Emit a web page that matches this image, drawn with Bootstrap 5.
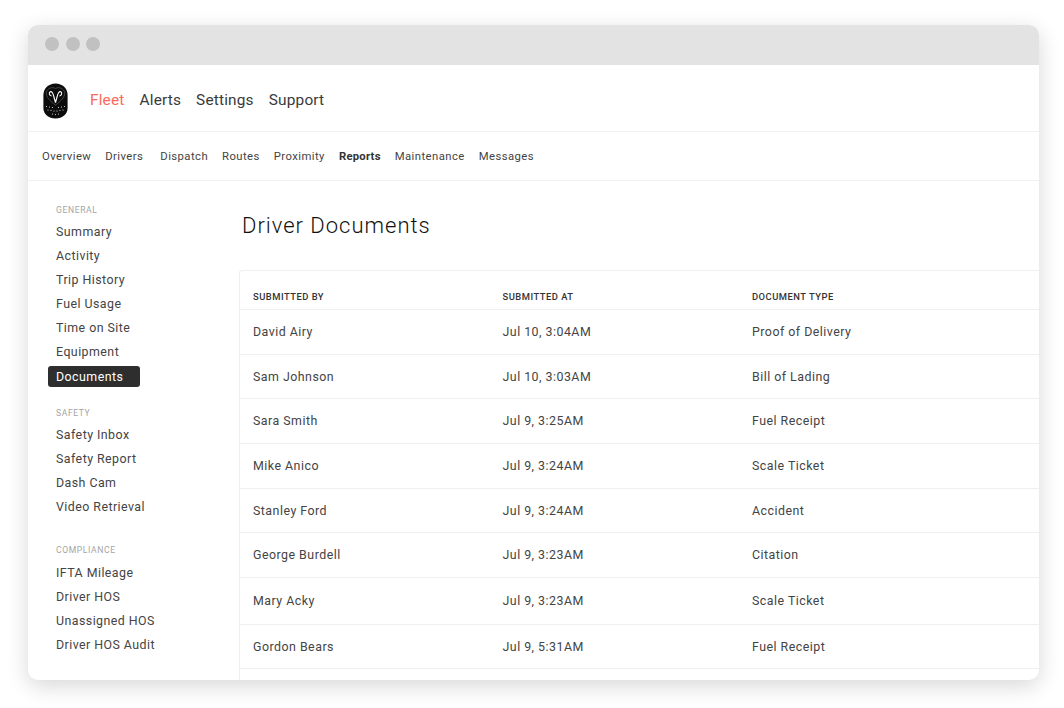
<!DOCTYPE html>
<html lang="en">
<head>
<meta charset="utf-8">
<title>Driver Documents</title>
<link href="https://cdn.jsdelivr.net/npm/bootstrap@5.3.0/dist/css/bootstrap.min.css" rel="stylesheet">
<style>
html,body{height:708px;overflow:hidden;background:#fff}
body{padding:25px 25px 28px 28px;font-family:Roboto,"Liberation Sans",sans-serif;color:#333}
.app-window{height:655px;border-radius:10px;overflow:hidden;background:#fff;box-shadow:0 6px 22px rgba(0,0,0,.16);display:flex;flex-direction:column}
.title-bar{height:40px;background:#e3e3e3;gap:6.5px;padding:0 0 2px 17px;flex:none}
.dot-btn{width:14px;height:14px;border-radius:50%;background:#c1c1c1}
.top-bar{height:67px;border-bottom:1px solid #f0f0f0;padding:6px 0 0 15px;flex:none}
.top-links{margin-left:22px;gap:15px}
.top-links a{font-size:15.4px;letter-spacing:.18px;color:#3a3a3a;text-decoration:none}
.top-links a.on{color:#fb6a5d}
.sub-bar{height:49px;border-bottom:1px solid #f0f0f0;padding:2px 0 0 14px;gap:14px;flex:none}
.sub-bar a{font-size:11.3px;letter-spacing:.43px;color:#444;text-decoration:none}
.sub-bar a.on{font-weight:700;color:#333;letter-spacing:.25px}
.sub-bar a.wide-gap{margin-right:3px}
.body-area{flex:1;min-height:0}
.side-col{width:211px;flex:none;padding:23px 0 0 20px}
.side-head{font-size:8.6px;letter-spacing:.6px;color:#a5a5a5;padding-left:8px;line-height:12px;margin-bottom:4px;text-transform:uppercase}
.side-head.spaced{margin-bottom:5px}
.side-list{margin-bottom:20px}
.side-list.roomy{margin-bottom:25px}
.side-list a{display:block;width:92px;height:24px;line-height:24px;padding-left:8px;font-size:12.4px;letter-spacing:.45px;color:#444;text-decoration:none;white-space:nowrap}
.side-list a.on{background:#2e2e2e;color:#fff;height:21px;line-height:21px;margin-top:2px;margin-bottom:2px;border-radius:3px}
.main-col{flex:1;min-width:0;overflow:hidden}
.page-title{font-size:22px;font-weight:300;letter-spacing:1px;color:#111;margin:30px 0 30px 3px;line-height:29px}
.doc-box{width:998px;border:1px solid #efefef;border-radius:3px 0 0 0;border-right:0;border-bottom:0}
.doc-table{table-layout:fixed;margin:0;width:998px}
.doc-table>*>tr>*{padding:1px 0 0 13px;vertical-align:middle;border-bottom:1px solid #efefef;box-shadow:none;color:#444;font-size:12.4px;letter-spacing:.48px;font-weight:400}
.doc-table thead th{height:38px;padding-top:15px;font-size:9.4px;font-weight:500;letter-spacing:.5px;color:#333;text-transform:uppercase}
.doc-table tbody td{height:45px}
.doc-table tbody tr.snug td{height:44px;padding-top:2px}
.doc-table tbody tr.tall td{height:47px;padding-top:2px}
</style>
</head>
<body>
<div class="app-window">
  <div class="title-bar d-flex align-items-center">
    <span class="dot-btn"></span><span class="dot-btn"></span><span class="dot-btn"></span>
  </div>
  <div class="top-bar d-flex align-items-center">
    <svg width="25" height="36" viewBox="0 0 25 36" aria-label="Owl logo">
      <path d="M12.5 0.5C19.5 0.5 24.6 5.5 24.6 12V25C24.6 31 19.5 35.5 12.5 35.5S0.4 31 0.4 25V12C0.4 5.5 5.5 0.5 12.5 0.5Z" fill="#0c0c0c"/>
      <path d="M12.5 22C7.5 18.5 2.8 14 3.3 9.5C3.9 5.8 9 3.2 12.5 5.5C16 3.2 21.1 5.8 21.7 9.5C22.2 14 17.5 18.5 12.5 22Z" fill="none" stroke="#666" stroke-width=".6"/>
      <path d="M12.5 19.5L10.8 13.5C10.2 10.5 8.8 8 7.2 8.8C5.6 9.8 6.2 12.8 8.6 13M12.5 19.5L14.2 13.5C14.8 10.5 16.2 8 17.8 8.8C19.4 9.8 18.8 12.8 16.4 13" fill="none" stroke="#fff" stroke-width="1.1"/>
      <g fill="#ddd">
        <circle cx="3.5" cy="23.5" r=".6"/><circle cx="6.5" cy="24" r=".6"/><circle cx="9.5" cy="24.5" r=".6"/><circle cx="15.5" cy="24.5" r=".6"/><circle cx="18.5" cy="24" r=".6"/><circle cx="21.5" cy="23.5" r=".6"/>
        <circle cx="5" cy="27" r=".6"/><circle cx="8" cy="27.5" r=".6"/><circle cx="11" cy="28" r=".6"/><circle cx="14" cy="28" r=".6"/><circle cx="17" cy="27.5" r=".6"/><circle cx="20" cy="27" r=".6"/>
        <circle cx="9.5" cy="31" r=".6"/><circle cx="12.5" cy="31.5" r=".6"/><circle cx="15.5" cy="31" r=".6"/>
      </g>
    </svg>
    <nav class="top-links d-flex">
      <a class="on" href="#">Fleet</a><a href="#">Alerts</a><a href="#">Settings</a><a href="#">Support</a>
    </nav>
  </div>
  <nav class="sub-bar d-flex align-items-center">
    <a href="#">Overview</a><a class="wide-gap" href="#">Drivers</a><a href="#">Dispatch</a><a href="#">Routes</a><a href="#">Proximity</a><a class="on" href="#">Reports</a><a href="#">Maintenance</a><a href="#">Messages</a>
  </nav>
  <div class="body-area d-flex">
    <aside class="side-col">
      <div class="side-head">General</div>
      <div class="side-list">
        <a href="#">Summary</a><a href="#">Activity</a><a href="#">Trip History</a><a href="#">Fuel Usage</a><a href="#">Time on Site</a><a href="#">Equipment</a><a class="on" href="#">Documents</a>
      </div>
      <div class="side-head">Safety</div>
      <div class="side-list roomy">
        <a href="#">Safety Inbox</a><a href="#">Safety Report</a><a href="#">Dash Cam</a><a href="#">Video Retrieval</a>
      </div>
      <div class="side-head spaced">Compliance</div>
      <div class="side-list">
        <a href="#">IFTA Mileage</a><a href="#">Driver HOS</a><a href="#">Unassigned HOS</a><a href="#">Driver HOS Audit</a>
      </div>
    </aside>
    <main class="main-col">
      <h1 class="page-title">Driver Documents</h1>
      <div class="doc-box">
        <table class="table doc-table">
          <thead><tr><th>Submitted by</th><th>Submitted at</th><th>Document type</th><th></th></tr></thead>
          <tbody>
            <tr><td>David Airy</td><td>Jul 10, 3:04AM</td><td>Proof of Delivery</td><td></td></tr>
            <tr class="snug"><td>Sam Johnson</td><td>Jul 10, 3:03AM</td><td>Bill of Lading</td><td></td></tr>
            <tr><td>Sara Smith</td><td>Jul 9, 3:25AM</td><td>Fuel Receipt</td><td></td></tr>
            <tr><td>Mike Anico</td><td>Jul 9, 3:24AM</td><td>Scale Ticket</td><td></td></tr>
            <tr class="snug"><td>Stanley Ford</td><td>Jul 9, 3:24AM</td><td>Accident</td><td></td></tr>
            <tr><td>George Burdell</td><td>Jul 9, 3:23AM</td><td>Citation</td><td></td></tr>
            <tr class="tall"><td>Mary Acky</td><td>Jul 9, 3:23AM</td><td>Scale Ticket</td><td></td></tr>
            <tr class="snug"><td>Gordon Bears</td><td>Jul 9, 5:31AM</td><td>Fuel Receipt</td><td></td></tr>
            <tr><td>&nbsp;</td><td></td><td></td><td></td></tr>
          </tbody>
        </table>
      </div>
    </main>
  </div>
</div>
<script src="https://cdn.jsdelivr.net/npm/bootstrap@5.3.0/dist/js/bootstrap.bundle.min.js"></script>
</body>
</html>
